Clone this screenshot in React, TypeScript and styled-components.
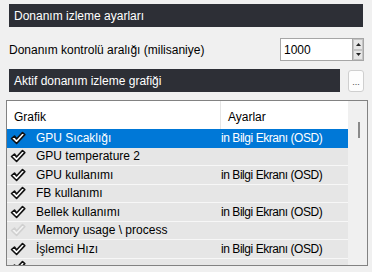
import React from 'react';
import styled, { createGlobalStyle } from 'styled-components';

const GlobalStyle = createGlobalStyle`
  html, body {
    margin: 0;
    padding: 0;
    background: #f0f0f0;
  }
  body {
    font-family: "Liberation Sans", Arial, sans-serif;
    font-size: 12px;
    color: #000;
  }
`;

const Page = styled.div`
  width: 372px;
  height: 272px;
  overflow: hidden;
  display: flex;
  flex-direction: column;
  padding-top: 4px;
  box-sizing: border-box;
`;

const SectionBar = styled.div<{ $width?: number }>`
  width: ${(p) => p.$width ?? 354}px;
  height: 23px;
  background: #2d2f36;
  color: #fff;
  display: flex;
  align-items: center;
  padding-left: 5px;
  box-sizing: border-box;
  flex-shrink: 0;
`;

const Indent = styled.div`
  padding: 0 9px;
`;

const SettingRow = styled.div`
  margin-top: 11px;
  height: 23px;
  display: flex;
  align-items: center;
  justify-content: space-between;
  padding: 0 8px 0 9px;
`;

const SpinBox = styled.div`
  display: flex;
  height: 23px;
`;

const SpinInput = styled.div`
  width: 72px;
  height: 23px;
  box-sizing: border-box;
  border: 1px solid #a6a6a6;
  border-right: none;
  background: #fff;
  padding: 0 3px;
  display: flex;
  align-items: center;
`;

const SpinButtons = styled.div`
  width: 12px;
  display: flex;
  flex-direction: column;
  border: 1px solid #a6a6a6;
  box-sizing: border-box;
  background: #fff;
`;

const SpinButton = styled.div`
  flex: 1;
  background: #e6e6e6;
  border: 1px solid #c4c4c4;
  display: flex;
  align-items: center;
  justify-content: center;
`;

const BarRow = styled.div`
  margin-top: 8px;
  display: flex;
  align-items: center;
  gap: 8px;
  padding-left: 9px;
`;

const DotsButton = styled.div`
  width: 16px;
  height: 22px;
  box-sizing: border-box;
  border: 1px solid #cfcfcf;
  border-radius: 3px;
  background: #fdfdfd;
  color: #444;
  font-size: 9px;
  display: flex;
  align-items: flex-end;
  justify-content: center;
  padding-bottom: 4px;
`;

const ListBox = styled.div`
  margin: 8px 0 0 6px;
  width: 362px;
  height: 166px;
  box-sizing: border-box;
  border: 1px solid #828282;
  background: #fff;
  display: flex;
  overflow: hidden;
`;

const ListBody = styled.div`
  flex: 1;
  display: flex;
  flex-direction: column;
  overflow: hidden;
`;

const HeaderRow = styled.div`
  height: 28px;
  display: flex;
  flex-shrink: 0;
  background: #fff;
`;

const HeaderCell = styled.div<{ $first?: boolean }>`
  width: ${(p) => (p.$first ? '206px' : 'auto')};
  flex: ${(p) => (p.$first ? 'none' : '1')};
  padding-left: 7px;
  display: flex;
  align-items: center;
  padding-top: 4px;
  border-right: ${(p) => (p.$first ? '1px solid #e5e5e5' : 'none')};
`;

const Row = styled.div<{ $selected?: boolean }>`
  height: 18.5px;
  flex-shrink: 0;
  display: flex;
  align-items: center;
  box-sizing: border-box;
  background: ${(p) => (p.$selected ? '#0078d7' : '#e6e6e6')};
  color: ${(p) => (p.$selected ? '#fff' : '#000')};
  border-bottom: 1px solid ${(p) => (p.$selected ? '#0078d7' : '#f7f7f7')};
`;

const NameCell = styled.div`
  width: 207px;
  display: flex;
  align-items: center;
  padding-left: 3px;
  box-sizing: border-box;
`;

const CheckBox = styled.span`
  width: 16px;
  height: 14px;
  margin-right: 10px;
  display: flex;
`;

const SettingCell = styled.div`
  flex: 1;
  padding-left: 7px;
  white-space: nowrap;
  letter-spacing: -0.45px;
`;

const ScrollTrack = styled.div`
  width: 19px;
  flex-shrink: 0;
  background: #f0f0f0;
  position: relative;
`;

const ScrollThumb = styled.div`
  position: absolute;
  left: 10px;
  top: 21px;
  width: 2px;
  height: 16px;
  background: #8a8a8a;
`;

const Arrow = ({ up }: { up?: boolean }) => (
  <svg width={5} height={3} viewBox="0 0 5 3">
    <polygon points={up ? '2.5,0 5,3 0,3' : '0,0 5,0 2.5,3'} fill="#222" />
  </svg>
);

const Check = ({ faded }: { faded?: boolean }) => (
  <svg width={16} height={14} viewBox="0 0 16 14">
    <path
      d="M1.5 7.5 L4.5 5 L6.5 8 L12.5 1.5 L14.8 3.6 L6.6 12.5 Z"
      fill={faded ? '#f2f2f2' : '#fff'}
      stroke={faded ? '#d0d0d0' : '#111'}
      strokeWidth={1.6}
      strokeLinejoin="round"
    />
  </svg>
);

const ROWS: { name: string; osd: boolean; faded?: boolean; selected?: boolean }[] = [
  { name: 'GPU Sıcaklığı', osd: true, selected: true },
  { name: 'GPU temperature 2', osd: false },
  { name: 'GPU kullanımı', osd: true },
  { name: 'FB kullanımı', osd: false },
  { name: 'Bellek kullanımı', osd: true },
  { name: 'Memory usage \\ process', osd: false, faded: true },
  { name: 'İşlemci Hızı', osd: true },
  { name: '', osd: false },
];

export default function App() {
  return (
    <>
      <GlobalStyle />
      <Page>
        <Indent>
          <SectionBar>Donanım izleme ayarları</SectionBar>
        </Indent>
        <SettingRow>
          <span>Donanım kontrolü aralığı (milisaniye)</span>
          <SpinBox>
            <SpinInput>1000</SpinInput>
            <SpinButtons>
              <SpinButton><Arrow up /></SpinButton>
              <SpinButton><Arrow /></SpinButton>
            </SpinButtons>
          </SpinBox>
        </SettingRow>
        <BarRow>
          <SectionBar $width={331}>Aktif donanım izleme grafiği</SectionBar>
          <DotsButton>...</DotsButton>
        </BarRow>
        <ListBox>
          <ListBody>
            <HeaderRow>
              <HeaderCell $first>Grafik</HeaderCell>
              <HeaderCell>Ayarlar</HeaderCell>
            </HeaderRow>
            {ROWS.map((r, i) => (
              <Row key={i} $selected={r.selected}>
                <NameCell>
                  <CheckBox><Check faded={r.faded} /></CheckBox>
                  {r.name}
                </NameCell>
                <SettingCell>{r.osd ? 'in Bilgi Ekranı (OSD)' : ''}</SettingCell>
              </Row>
            ))}
          </ListBody>
          <ScrollTrack>
            <ScrollThumb />
          </ScrollTrack>
        </ListBox>
      </Page>
    </>
  );
}
